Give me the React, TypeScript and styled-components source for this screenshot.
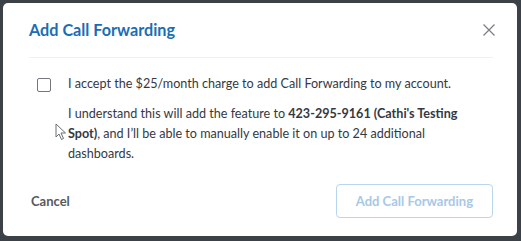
import React from "react";
import styled, { createGlobalStyle } from "styled-components";

const Global = createGlobalStyle`
  html, body { margin: 0; padding: 0; background: #3c4047; }
  body { font-family: Lato, "Open Sans", sans-serif; -webkit-font-smoothing: antialiased; }
`;

const Backdrop = styled.div`
  width: 521px;
  height: 241px;
  box-sizing: border-box;
  padding: 3px 4px 5px 3px;
  background: #3c4047;
`;

const Modal = styled.div`
  position: relative;
  height: 100%;
  box-sizing: border-box;
  background: #ffffff;
  border-radius: 5px;
  padding: 0 22px 0 26px;
  display: flex;
  flex-direction: column;
`;

const Header = styled.div`
  display: flex;
  align-items: center;
  justify-content: space-between;
  height: 54px;
  border-bottom: 1px solid #eef0f2;
  margin-right: 2px;
`;

const Title = styled.h2`
  margin: 0;
  padding-bottom: 1px;
  font-family: Lato, sans-serif;
  font-weight: 700;
  font-size: 16.2px;
  color: #1a6db4;
`;

const CloseButton = styled.button`
  border: 0;
  background: none;
  padding: 0;
  width: 14px;
  height: 14px;
  margin-right: -3px;
  display: flex;
  cursor: pointer;
`;

const Body = styled.div`
  display: flex;
  gap: 17px;
  padding: 18px 0 0 8px;
`;

const CheckBox = styled.span`
  flex: none;
  width: 12px;
  height: 12px;
  margin-top: 2px;
  border: 1.5px solid #74787e;
  border-radius: 2px;
`;

const TextCol = styled.div`
  max-width: 400px;
  display: flex;
  flex-direction: column;
  gap: 10px;
  font-family: Lato, sans-serif;
  font-size: 12.6px;
  line-height: 20px;
  color: #35393f;
  margin-top: -2px;
`;

const Para = styled.p`
  margin: 0;
`;

const Footer = styled.div`
  display: flex;
  align-items: center;
  justify-content: space-between;
  margin-top: auto;
  padding-bottom: 18px;
  margin-right: 2px;
`;

const CancelButton = styled.button`
  border: 0;
  background: none;
  padding: 0 0 0 2px;
  font-family: Lato, sans-serif;
  font-weight: 700;
  font-size: 13px;
  color: #555a61;
  cursor: pointer;
`;

const PrimaryButton = styled.button<{ $disabled?: boolean }>`
  height: 34px;
  padding: 0 19px;
  border-radius: 4px;
  background: #ffffff;
  border: 1px solid ${(p) => (p.$disabled ? "#b9d6ee" : "#1a6db4")};
  color: ${(p) => (p.$disabled ? "#a7c8e6" : "#1a6db4")};
  font-family: Lato, sans-serif;
  font-weight: 700;
  font-size: 13px;
`;

const Cursor = styled.svg`
  position: absolute;
  left: 52px;
  top: 120px;
`;

export default function App() {
  return (
    <>
      <Global />
      <Backdrop>
        <Modal>
          <Header>
            <Title>Add Call Forwarding</Title>
            <CloseButton aria-label="Close">
              <svg width="14" height="14" viewBox="0 0 14 14">
                <path d="M1.5 1.5 L12.5 12.5 M12.5 1.5 L1.5 12.5" stroke="#7b7f86" strokeWidth="1.3" />
              </svg>
            </CloseButton>
          </Header>
          <Body>
            <CheckBox />
            <TextCol>
              <Para>I accept the $25/month charge to add Call Forwarding to my account.</Para>
              <Para>
                I understand this will add the feature to <b>423-295-9161 (Cathi's Testing Spot)</b>, and I’ll be able to
                manually enable it on up to 24 additional dashboards.
              </Para>
            </TextCol>
          </Body>
          <Footer>
            <CancelButton>Cancel</CancelButton>
            <PrimaryButton $disabled disabled>
              Add Call Forwarding
            </PrimaryButton>
          </Footer>
          <Cursor width="12" height="18" viewBox="0 0 12 18">
            <path d="M1 1 L1 14 L4 11 L6.5 16.5 L8.5 15.5 L6 10 L10.5 10 Z" fill="#fff" stroke="#6a6e74" strokeWidth="1" strokeLinejoin="round" />
          </Cursor>
        </Modal>
      </Backdrop>
    </>
  );
}
